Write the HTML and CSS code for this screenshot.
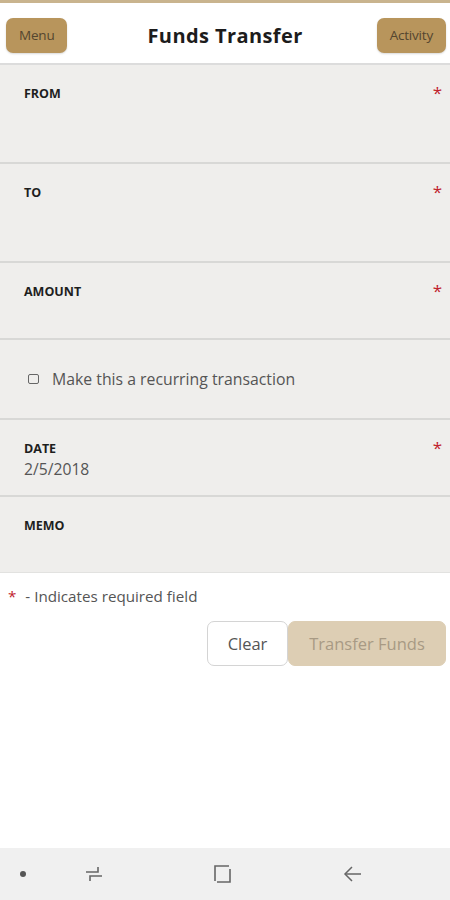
FILE: index.html
```html
<!DOCTYPE html>
<html lang="en">
<head>
  <meta charset="UTF-8">
  <title>Funds Transfer</title>
  <meta name="viewport" content="width=device-width, initial-scale=1.0" />
  <link rel="stylesheet" href="styles.css">
</head>
<body>
  <div class="app">
    <header class="topbar">
      <button class="top-btn">Menu</button>
      <h1>Funds Transfer</h1>
      <button class="top-btn">Activity</button>
    </header>

    <div class="field tall">
      <span class="label">FROM</span>
      <span class="req">*</span>
    </div>
    <div class="field tall">
      <span class="label">TO</span>
      <span class="req">*</span>
    </div>
    <div class="field mid">
      <span class="label">AMOUNT</span>
      <span class="req">*</span>
    </div>
    <div class="field check-row">
      <label class="check"><span class="box"></span>Make this a recurring transaction</label>
    </div>
    <div class="field mid">
      <div class="stack">
        <span class="label">DATE</span>
        <span class="value">2/5/2018</span>
      </div>
      <span class="req">*</span>
    </div>
    <div class="field mid last">
      <span class="label">MEMO</span>
    </div>

    <p class="note"><span class="star">*</span> - Indicates required field</p>

    <div class="actions">
      <button class="btn-clear">Clear</button>
      <button class="btn-submit">Transfer Funds</button>
    </div>

    <div class="spacer"></div>

    <nav class="sysbar">
      <span class="dot"></span>
      <svg width="22" height="22" viewBox="0 0 22 22" fill="none" stroke="#666" stroke-width="1.6">
        <path d="M3 9 H15 V4"/>
        <path d="M19 13 H7 V18"/>
      </svg>
      <svg width="22" height="22" viewBox="0 0 22 22" fill="none" stroke="#666" stroke-width="1.6">
        <path d="M4 18 V3 H18"/>
        <path d="M6 19 H19 V6"/>
      </svg>
      <svg width="22" height="22" viewBox="0 0 22 22" fill="none" stroke="#666" stroke-width="1.5">
        <path d="M19 11 H3"/>
        <path d="M10 4 L3 11 L10 18"/>
      </svg>
    </nav>
  </div>
</body>
</html>
```

FILE: styles.css
```css
* {
  margin: 0;
  padding: 0;
  box-sizing: border-box;
}

body {
  font-family: 'Open Sans', 'Noto Sans', sans-serif;
  background: #fff;
  color: #222;
}

.app {
  height: 900px;
  display: flex;
  flex-direction: column;
  border-top: 3px solid #c9b48e;
}

.topbar {
  height: 62px;
  display: flex;
  align-items: center;
  justify-content: space-between;
  padding: 4px 4px 0 6px;
  border-bottom: 2px solid #dcdcdc;
}

.topbar h1 {
  font-size: 20px;
  font-weight: 700;
  letter-spacing: 0.4px;
  color: #1c1c1c;
  margin-left: 6px;
}

.top-btn {
  font-family: 'Open Sans', sans-serif;
  height: 35px;
  padding: 0 13px;
  border: none;
  border-radius: 7px;
  background: #b8955c;
  color: #54462f;
  font-size: 13.5px;
  letter-spacing: -0.2px;
  box-shadow: 0 1px 2px rgba(0, 0, 0, 0.15);
}

.field {
  background: #efeeec;
  border-bottom: 2px solid #d8d8d6;
  display: flex;
  justify-content: space-between;
  align-items: flex-start;
  padding: 20px 8px 0 24px;
}

.field.tall {
  height: 99px;
}

.field.mid {
  height: 77px;
}

.field.last {
  height: 76px;
  border-bottom: 1px solid #e2e2e0;
}

.field.check-row {
  height: 80px;
  align-items: center;
  padding: 0 0 0 28px;
}

.label {
  font-size: 12.5px;
  font-weight: 700;
  color: #1e1e1e;
  line-height: 18px;
}

.stack {
  display: flex;
  flex-direction: column;
}

.value {
  font-size: 15.7px;
  color: #555;
  line-height: 22px;
}

.req {
  color: #c0222c;
  font-size: 17px;
  line-height: 18px;
  margin-top: -1px;
}

.check {
  display: flex;
  align-items: center;
  gap: 13px;
  font-size: 15.8px;
  color: #555;
}

.box {
  width: 11px;
  height: 10px;
  border: 1px solid #666;
  border-radius: 2px;
}

.note {
  font-size: 15.2px;
  color: #555;
  padding: 13px 0 0 8px;
  line-height: 20px;
}

.star {
  color: #c0222c;
  margin-right: 5px;
}

.actions {
  display: flex;
  justify-content: flex-end;
  padding: 15px 4px 0 0;
}

.actions button {
  font-family: 'Open Sans', sans-serif;
  height: 45px;
  font-size: 16.5px;
  border-radius: 7px;
}

.btn-clear {
  width: 81px;
  background: #fff;
  border: 1px solid #d4d4d4;
  color: #555;
}

.btn-submit {
  width: 158px;
  background: #ddceb4;
  border: 1px solid #ddceb4;
  color: #a89a84;
}

.spacer {
  flex: 1;
}

.sysbar {
  height: 52px;
  background: #f0f0f0;
  display: flex;
  align-items: center;
  padding: 0 0 0 20px;
}

.dot {
  width: 6px;
  height: 6px;
  border-radius: 50%;
  background: #555;
  margin-right: 57px;
}

.sysbar svg:nth-of-type(1) {
  margin-right: 106px;
}

.sysbar svg:nth-of-type(2) {
  margin-right: 109px;
}
```
